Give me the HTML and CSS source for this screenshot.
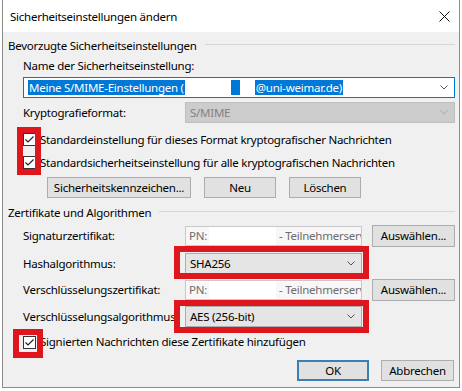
FILE: index.html
```html
<!DOCTYPE html>
<html lang="de">
<head>
    <meta charset="UTF-8">
    <meta name="viewport" content="width=device-width, initial-scale=1.0">
    <title>Sicherheitseinstellungen ändern</title>
    <link rel="stylesheet" href="styles.css">
</head>
<body>
    <div class="window">
        <div class="titlebar">
            <span>Sicherheitseinstellungen ändern</span>
            <svg class="close" width="11" height="11" viewBox="0 0 11 11"><path d="M0.5 0.5 L10.5 10.5 M10.5 0.5 L0.5 10.5" stroke="#111" stroke-width="1" fill="none"/></svg>
        </div>
        <div class="content">
            <div class="group-head"><span>Bevorzugte Sicherheitseinstellungen</span><span class="rule"></span></div>
            <div class="group">
                <div class="caption">Name der Sicherheitseinstellung:</div>
                <div class="combo editable">
                    <span class="value"><span class="sel">Meine S/MIME-Einstellungen (</span><span class="redact r1"></span><span class="sel chunk"></span><span class="redact r2"></span><span class="sel">@uni-weimar.de)</span></span>
                    <svg class="chev" width="8" height="5" viewBox="0 0 8 5"><path d="M0.5 0.5 L4 4 L7.5 0.5" fill="none" stroke="#555"/></svg>
                </div>
                <div class="field-row row-format">
                    <span class="label">Kryptografieformat:</span>
                    <div class="combo disabled wide">
                        <span class="value">S/MIME</span>
                        <svg class="chev" width="8" height="5" viewBox="0 0 8 5"><path d="M0.5 0.5 L4 4 L7.5 0.5" fill="none" stroke="#a8a8a8"/></svg>
                    </div>
                </div>
                <div class="check first">
                    <span class="box"><svg width="11" height="11" viewBox="0 0 11 11"><path d="M1.5 5.5 L4 8 L9.5 2.5" fill="none" stroke="#222" stroke-width="1.2"/></svg></span>
                    Standardeinstellung für dieses Format kryptografischer Nachrichten
                </div>
                <div class="check">
                    <span class="box"><svg width="11" height="11" viewBox="0 0 11 11"><path d="M1.5 5.5 L4 8 L9.5 2.5" fill="none" stroke="#222" stroke-width="1.2"/></svg></span>
                    Standardsicherheitseinstellung für alle kryptografischen Nachrichten
                </div>
                <div class="buttons">
                    <button class="btn btn-labels">Sicherheitskennzeichen...</button>
                    <button class="btn btn-small">Neu</button>
                    <button class="btn btn-small">Löschen</button>
                </div>
            </div>

            <div class="group-head second"><span>Zertifikate und Algorithmen</span><span class="rule"></span></div>
            <div class="group">
                <div class="field-row row-sign">
                    <span class="label">Signaturzertifikat:</span>
                    <div class="cert"><span class="pn">PN:</span><span class="redact"></span><span class="rest">- Teilnehmerservice</span></div>
                    <button class="btn btn-pick">Auswählen...</button>
                </div>
                <div class="field-row row-hash">
                    <span class="label">Hashalgorithmus:</span>
                    <div class="combo list">
                        <span class="value">SHA256</span>
                        <svg class="chev" width="8" height="5" viewBox="0 0 8 5"><path d="M0.5 0.5 L4 4 L7.5 0.5" fill="none" stroke="#555"/></svg>
                    </div>
                </div>
                <div class="field-row row-enc">
                    <span class="label">Verschlüsselungszertifikat:</span>
                    <div class="cert"><span class="pn">PN:</span><span class="redact"></span><span class="rest">- Teilnehmerservice</span></div>
                    <button class="btn btn-pick">Auswählen...</button>
                </div>
                <div class="field-row row-alg">
                    <span class="label">Verschlüsselungsalgorithmus:</span>
                    <div class="combo list">
                        <span class="value">AES (256-bit)</span>
                        <svg class="chev" width="8" height="5" viewBox="0 0 8 5"><path d="M0.5 0.5 L4 4 L7.5 0.5" fill="none" stroke="#555"/></svg>
                    </div>
                </div>
                <div class="check sign">
                    <span class="box"><svg width="11" height="11" viewBox="0 0 11 11"><path d="M1.5 5.5 L4 8 L9.5 2.5" fill="none" stroke="#222" stroke-width="1.2"/></svg></span>
                    Signierten Nachrichten diese Zertifikate hinzufügen
                </div>
            </div>

            <div class="footer">
                <button class="btn btn-ok">OK</button>
                <button class="btn btn-cancel">Abbrechen</button>
            </div>
        </div>

        <div class="mark mark-checks"></div>
        <div class="mark mark-hash"></div>
        <div class="mark mark-alg"></div>
        <div class="mark mark-sign"></div>
    </div>
</body>
</html>
```

FILE: styles.css
```css
body {
    margin: 0;
    background: #fff;
    font-family: "Noto Sans", "Segoe UI", sans-serif;
    font-size: 11.5px;
    letter-spacing: -0.25px;
    line-height: 16px;
    color: #000;
}

.window {
    position: relative;
    margin-left: 2px;
    width: 458px;
    height: 388px;
    box-sizing: border-box;
    border: 1px solid #8c8c8c;
    border-top: none;
    background: #f0f0f0;
}

.titlebar {
    height: 32px;
    background: #fff;
    display: flex;
    align-items: center;
    justify-content: space-between;
    padding: 1px 9px 0 7px;
    box-sizing: border-box;
}

.content {
    padding: 5px 4px 0 5px;
}

.group-head {
    display: flex;
    align-items: center;
    gap: 8px;
    height: 17px;
}
.group-head.second {
    margin-top: 6px;
}
.group-head .rule {
    flex: 1;
    height: 1px;
    background: #d5d5d5;
    margin-top: -2px;
}

.group {
    margin-left: 15px;
}

.caption {
    margin-top: 4px;
}

/* combos and fields */
.combo {
    display: flex;
    align-items: center;
    justify-content: space-between;
    height: 21px;
    box-sizing: border-box;
    border: 1px solid #adadad;
    background: #e5e5e5;
    padding: 0 6px 0 4px;
    white-space: nowrap;
}
.combo.editable {
    margin-top: 3px;
    background: #fff;
    border-color: #0078d7;
    padding-left: 4px;
}
.combo.disabled {
    background: #cccccc;
    border-color: #bfbfbf;
    color: #838383;
}
.combo.wide {
    flex: 1;
}
.combo.list {
    width: 177px;
}

.sel {
    background: #0078d7;
    color: #fff;
    display: inline-block;
    height: 15px;
    line-height: 15px;
    padding: 0 1px;
}
.sel.chunk {
    width: 9px;
    padding: 0;
}
.combo .redact {
    display: inline-block;
    height: 15px;
    background: #fff;
}
.redact.r1 {
    width: 46px;
}
.redact.r2 {
    width: 15px;
}
.value {
    display: flex;
    align-items: center;
}

.field-row {
    display: flex;
    align-items: center;
}
.field-row .label {
    width: 162px;
    flex: none;
    white-space: nowrap;
}
.row-format {
    margin-top: 4px;
    height: 21px;
}
.row-sign {
    margin-top: 4px;
    height: 22px;
}
.row-hash {
    margin-top: 6px;
    height: 21px;
}
.row-enc {
    margin-top: 5px;
    height: 22px;
}
.row-alg {
    margin-top: 5px;
    height: 21px;
}

.cert {
    width: 177px;
    height: 20px;
    box-sizing: border-box;
    border: 1px solid #c9c9c9;
    background: #f7f7f7;
    color: #6d6d6d;
    display: flex;
    align-items: center;
    padding-left: 3px;
    overflow: hidden;
    white-space: nowrap;
}
.cert .pn {
    flex: none;
}
.cert .redact {
    width: 67px;
    height: 18px;
    background: #fff;
    margin: 0 3px 0 2px;
    flex: none;
}
.cert .rest {
    min-width: 0;
    overflow: hidden;
}

/* checkboxes */
.check {
    display: flex;
    align-items: center;
    height: 23px;
    white-space: nowrap;
}
.check.first {
    margin-top: 5px;
}
.check.sign {
    margin-top: 4px;
    height: 22px;
}
.box {
    width: 13px;
    height: 13px;
    box-sizing: border-box;
    border: 1px solid #333;
    background: #fff;
    margin-right: 4px;
    display: flex;
    align-items: center;
    justify-content: center;
    flex: none;
}

/* buttons */
.btn {
    font: inherit;
    letter-spacing: inherit;
    color: #000;
    height: 21px;
    box-sizing: border-box;
    border: 1px solid #adadad;
    background: #e1e1e1;
    padding: 0;
    white-space: nowrap;
}
.buttons {
    display: flex;
    gap: 13px;
    margin: 3px 0 0 24px;
}
.btn-labels {
    width: 144px;
}
.btn-small {
    width: 72px;
}
.btn-pick {
    width: 83px;
    height: 22px;
    margin-left: auto;
}

.footer {
    display: flex;
    justify-content: flex-end;
    gap: 12px;
    margin: 7px 1px 0 0;
}
.btn-ok {
    width: 72px;
    border: 2px solid #3c7fb1;
}
.btn-cancel {
    width: 73px;
}

/* red annotation frames */
.mark {
    position: absolute;
    box-sizing: border-box;
    border: 6px solid #e0161e;
}
.mark-checks {
    left: 14px;
    top: 127px;
    width: 24px;
    height: 48px;
}
.mark-hash {
    left: 171px;
    top: 246px;
    width: 195px;
    height: 33px;
}
.mark-alg {
    left: 171px;
    top: 300px;
    width: 195px;
    height: 33px;
}
.mark-sign {
    left: 10px;
    top: 329px;
    width: 30px;
    height: 29px;
}
```
